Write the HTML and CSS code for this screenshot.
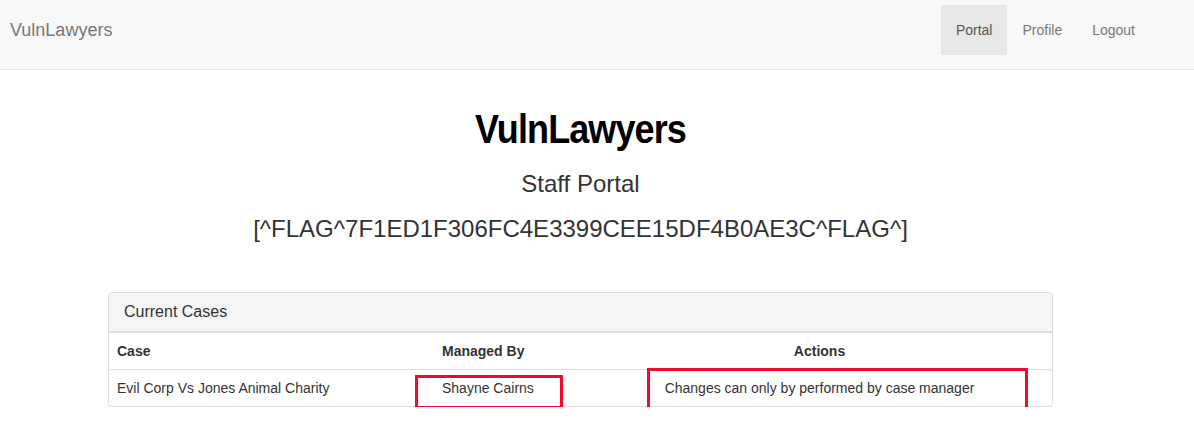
FILE: index.html
```html
<!DOCTYPE html>
<html>
<head>
<meta charset="utf-8">
<title>VulnLawyers</title>
<link rel="stylesheet" href="styles.css">
</head>
<body>
<nav class="navbar">
  <a class="brand" href="#">VulnLawyers</a>
  <ul class="nav">
    <li class="active"><a href="#">Portal</a></li>
    <li><a href="#">Profile</a></li>
    <li><a href="#">Logout</a></li>
  </ul>
</nav>
<main class="content">
  <h1 class="title">VulnLawyers</h1>
  <h3 class="subtitle">Staff Portal</h3>
  <h3 class="flag">[^FLAG^7F1ED1F306FC4E3399CEE15DF4B0AE3C^FLAG^]</h3>
  <div class="panel">
    <div class="panel-heading">Current Cases</div>
    <table class="table">
      <thead>
        <tr>
          <th class="c-case">Case</th>
          <th class="c-man">Managed By</th>
          <th class="c-act">Actions</th>
        </tr>
      </thead>
      <tbody>
        <tr>
          <td class="c-case">Evil Corp Vs Jones Animal Charity</td>
          <td class="c-man">Shayne Cairns</td>
          <td class="c-act">Changes can only by performed by case manager</td>
        </tr>
      </tbody>
    </table>
    <div class="mark mark-man"></div>
    <div class="mark mark-act"></div>
  </div>
</main>
</body>
</html>
```
FILE: styles.css
```css
* { box-sizing: border-box; }
html, body { margin: 0; padding: 0; }
body {
  font-family: "Liberation Sans", Arial, sans-serif;
  font-size: 14px;
  line-height: 1.42857;
  color: #333;
  background: #fff;
}
a { text-decoration: none; }

.navbar {
  display: flex;
  align-items: flex-start;
  justify-content: space-between;
  height: 70px;
  background: #f8f8f8;
  border-bottom: 1px solid #e7e7e7;
}
.brand {
  font-size: 18px;
  line-height: 20px;
  color: #777;
  padding: 20px 10px;
}
.nav {
  list-style: none;
  display: flex;
  margin: 5px 44px 0 0;
  padding: 0;
}
.nav li a {
  display: block;
  padding: 15px 15px;
  line-height: 20px;
  color: #777;
}
.nav li.active a {
  background: #e7e7e7;
  color: #555;
}

.content {
  width: 945px;
  margin-left: 108px;
  padding-top: 20px;
}
.title {
  text-align: center;
  font-size: 40px;
  font-weight: 700;
  color: #000;
  line-height: 1.1;
  margin: 17px 0 0;
  letter-spacing: -1px;
  transform: scaleX(0.9);
}
.subtitle {
  text-align: center;
  font-size: 24px;
  font-weight: 400;
  line-height: 1.1;
  margin: 20px 0 0;
  color: #333;
}
.flag {
  text-align: center;
  font-size: 24px;
  font-weight: 400;
  line-height: 1.1;
  margin: 19px 0 0;
  color: #333;
}

.panel {
  position: relative;
  margin-top: 49px;
  border: 1px solid #ddd;
  border-radius: 4px;
  background: #fff;
  box-shadow: 0 1px 1px rgba(0,0,0,.05);
}
.panel-heading {
  background: #f5f5f5;
  border-bottom: 1px solid #ddd;
  border-radius: 3px 3px 0 0;
  padding: 8px 15px;
  font-size: 16px;
  line-height: 22px;
  color: #333;
}
.table {
  width: 100%;
  border-collapse: collapse;
  table-layout: fixed;
}
.table th, .table td {
  padding: 8px;
  line-height: 20px;
  text-align: left;
  vertical-align: top;
}
.table th {
  font-weight: 700;
  border-bottom: 1px solid #ddd;
  border-top: 1px solid #ddd;
}
.table td { border-top: 1px solid #ddd; }
.table tbody tr:first-child td { border-top: 0; }
.c-case { width: 325px; }
.c-man { width: 153px; }
.table .c-act { text-align: center; }

.mark {
  position: absolute;
  border: 3px solid #f20a2c;
}
.mark-man { left: 306px; top: 82px; width: 148px; height: 34px; }
.mark-act { left: 538px; top: 75px; width: 381px; height: 43px; }
```
